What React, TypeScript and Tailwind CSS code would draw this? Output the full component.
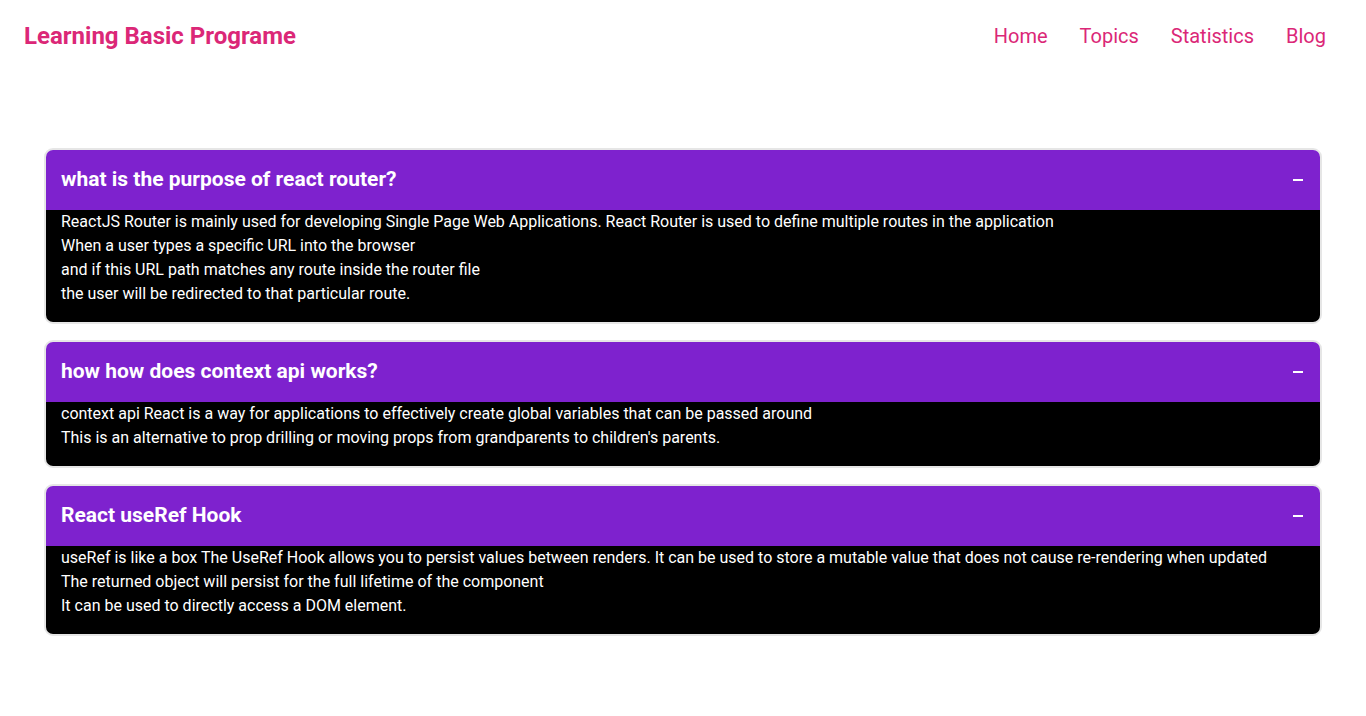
import React from 'react';

interface QA {
  question: string;
  lines: string[];
}

const items: QA[] = [
  {
    question: 'what is the purpose of react router?',
    lines: [
      'ReactJS Router is mainly used for developing Single Page Web Applications. React Router is used to define multiple routes in the application',
      'When a user types a specific URL into the browser',
      'and if this URL path matches any route inside the router file',
      'the user will be redirected to that particular route.',
    ],
  },
  {
    question: 'how how does context api works?',
    lines: [
      'context api React is a way for applications to effectively create global variables that can be passed around',
      "This is an alternative to prop drilling or moving props from grandparents to children's parents.",
    ],
  },
  {
    question: 'React useRef Hook',
    lines: [
      'useRef is like a box The UseRef Hook allows you to persist values between renders. It can be used to store a mutable value that does not cause re-rendering when updated',
      'The returned object will persist for the full lifetime of the component',
      'It can be used to directly access a DOM element.',
    ],
  },
];

const QuestionCard: React.FC<{ item: QA }> = ({ item }) => (
  <div className="rounded-[9px] border-2 border-[#e6e6e6] overflow-hidden">
    {/* Title */}
    <div className="flex items-center justify-between h-[60px] px-[15px] bg-[#7e22ce]">
      <h2 className="text-[21px] font-bold text-white">{item.question}</h2>
      <span className="w-[10px] h-[2px] bg-white mr-[2px]" />
    </div>

    {/* Answer */}
    <div className="bg-black px-[15px] pb-4 text-white text-base leading-6">
      {item.lines.map((line) => (
        <p key={line}>{line}</p>
      ))}
    </div>
  </div>
);

export default function App() {
  return (
    <div className="min-h-screen bg-white font-['Roboto',sans-serif]">
      {/* Navbar */}
      <header className="flex items-center justify-between h-[72px] px-6">
        <a className="text-2xl font-bold text-[#db2777]">Learning Basic Programe</a>
        <nav className="flex items-center">
          {['Home', 'Topics', 'Statistics', 'Blog'].map((link) => (
            <a key={link} className="px-4 text-xl text-[#db2777]">
              {link}
            </a>
          ))}
        </nav>
      </header>

      <main className="mx-[44px] pt-[76px] flex flex-col gap-4">
        {items.map((item) => (
          <QuestionCard key={item.question} item={item} />
        ))}
      </main>
    </div>
  );
}
